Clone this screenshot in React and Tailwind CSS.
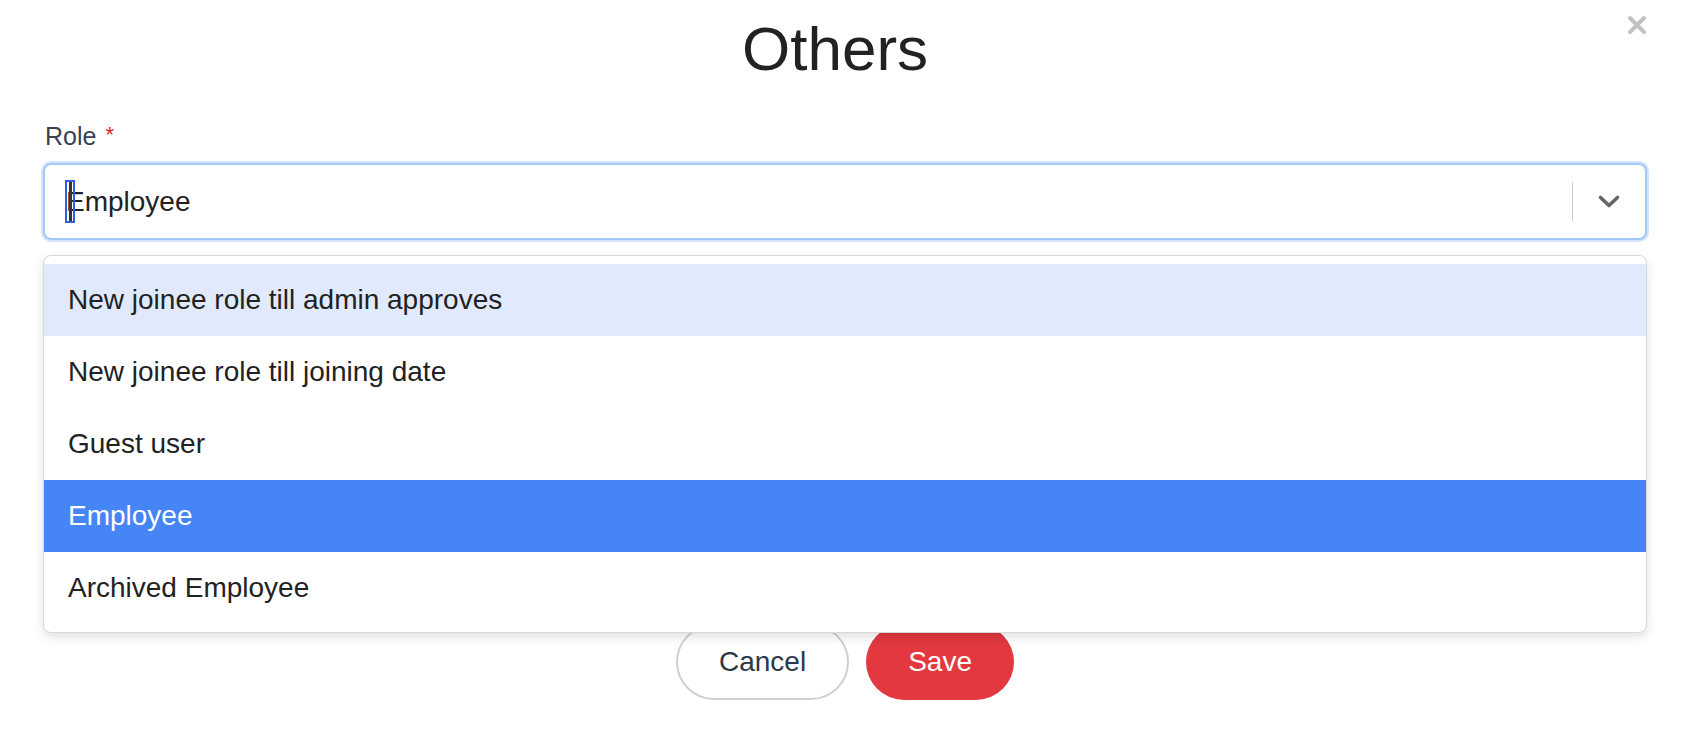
import { useState } from 'react';

const options = [
  'New joinee role till admin approves',
  'New joinee role till joining date',
  'Guest user',
  'Employee',
  'Archived Employee',
];

function Chevron() {
  return (
    <svg width="24" height="15" viewBox="0 0 24 15" fill="none">
      <path d="M3.5 3.5 L12 11.5 L20.5 3.5" stroke="#666" strokeWidth="3.6" strokeLinecap="round" strokeLinejoin="round" />
    </svg>
  );
}

function CloseIcon() {
  return (
    <svg width="20" height="20" viewBox="0 0 20 20" fill="none">
      <path d="M3 3 L17 17 M17 3 L3 17" stroke="#c2c2c2" strokeWidth="4" strokeLinecap="round" />
    </svg>
  );
}

export default function App() {
  const [selected] = useState('Employee');
  const hovered = options[0];

  return (
    <div className="relative w-full min-h-[755px] bg-white font-['Liberation_Sans',Arial,sans-serif]">
      <button className="absolute right-[47px] top-[15px] w-[20px] h-[20px] flex items-center justify-center">
        <CloseIcon />
      </button>

      <div className="pl-[43px] pr-[47px] pt-[18px]">
        <h1 className="text-center pr-[20px] text-[62px] leading-none text-[#222]">Others</h1>

        <div className="mt-[44px] ml-[2px] text-[25px] leading-none text-[#374151]">
          Role <span className="ml-[2px] text-[22px] align-top text-[#e02424]">*</span>
        </div>

        <div className="relative mt-[14px]">
          <div className="flex items-center h-[77px] rounded-[8px] border-2 border-[#a3c8f9] ring-2 ring-[#d4e4fc] bg-white">
            <div className="relative flex-1 pl-[21px] text-[28px] leading-none text-[#222]">
              <span className="absolute left-[20px] top-[-8px] w-[10px] h-[43px] border-2 border-[#2f5ee6] flex items-center justify-center">
                <span className="w-[3px] h-[39px] bg-[#333]" />
              </span>
              {selected}
            </div>
            <div className="w-px h-[39px] bg-[#cccccc]" />
            <div className="w-[72px] flex items-center justify-center">
              <Chevron />
            </div>
          </div>

          <div className="absolute left-0 right-0 top-[92px] z-10 py-[8px] rounded-[8px] border border-[#d9d9d9] bg-white shadow-[0_4px_11px_rgba(0,0,0,0.12)]">
            {options.map((opt) => {
              const isSel = opt === selected;
              const isHover = opt === hovered;
              return (
                <div
                  key={opt}
                  className={`h-[72px] flex items-center px-[24px] text-[28px] leading-none ${
                    isSel ? 'bg-[#4585f6] text-white' : isHover ? 'bg-[#e1eafc] text-[#222]' : 'text-[#222]'
                  }`}
                >
                  {opt}
                </div>
              );
            })}
          </div>
        </div>

        <div className="h-[384px]" />

        <div className="flex justify-center gap-[17px]">
          <button className="h-[76px] px-[41px] rounded-full border-2 border-[#cfcfcf] bg-white text-[28px] text-[#2d3748]">
            Cancel
          </button>
          <button className="h-[76px] px-[42px] rounded-full bg-[#e3383f] text-[28px] text-white">
            Save
          </button>
        </div>
      </div>
    </div>
  );
}
